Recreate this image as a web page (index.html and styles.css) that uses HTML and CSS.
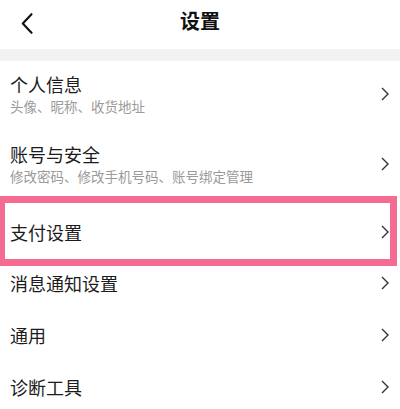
FILE: index.html
```html
<!DOCTYPE html>
<html lang="zh-CN">
<head>
<meta charset="utf-8">
<title>设置</title>
<link rel="stylesheet" href="styles.css">
</head>
<body>
<div class="page">
  <header class="header">
    <div class="header-left">
      <svg class="back" width="12" height="21" viewBox="0 0 12 21" aria-hidden="true">
        <path d="M10.5 1.2 L1.8 10.5 L10.5 19.8" fill="none" stroke="#111" stroke-width="2.1" stroke-linecap="round" stroke-linejoin="round"/>
      </svg>
    </div>
    <h1 class="title">设置</h1>
    <div class="header-right"></div>
  </header>
  <div class="band"></div>
  <ul class="list">
    <li class="row row--sub">
      <div class="row-text">
        <div class="row-title">个人信息</div>
        <div class="row-sub">头像、昵称、收货地址</div>
      </div>
      <svg class="chev" width="8" height="14" viewBox="0 0 8 14" aria-hidden="true"><path d="M1 1 L7 7 L1 13" fill="none" stroke="#333" stroke-width="1.4"/></svg>
    </li>
    <li class="row row--sub">
      <div class="row-text">
        <div class="row-title">账号与安全</div>
        <div class="row-sub">修改密码、修改手机号码、账号绑定管理</div>
      </div>
      <svg class="chev" width="8" height="14" viewBox="0 0 8 14" aria-hidden="true"><path d="M1 1 L7 7 L1 13" fill="none" stroke="#333" stroke-width="1.4"/></svg>
    </li>
    <li class="row row--highlight">
      <div class="row-title">支付设置</div>
      <svg class="chev" width="8" height="14" viewBox="0 0 8 14" aria-hidden="true"><path d="M1 1 L7 7 L1 13" fill="none" stroke="#333" stroke-width="1.4"/></svg>
      <span class="mark"></span>
    </li>
    <li class="row">
      <div class="row-title">消息通知设置</div>
      <svg class="chev" width="8" height="14" viewBox="0 0 8 14" aria-hidden="true"><path d="M1 1 L7 7 L1 13" fill="none" stroke="#333" stroke-width="1.4"/></svg>
    </li>
    <li class="row">
      <div class="row-title">通用</div>
      <svg class="chev" width="8" height="14" viewBox="0 0 8 14" aria-hidden="true"><path d="M1 1 L7 7 L1 13" fill="none" stroke="#333" stroke-width="1.4"/></svg>
    </li>
    <li class="row">
      <div class="row-title">诊断工具</div>
      <svg class="chev" width="8" height="14" viewBox="0 0 8 14" aria-hidden="true"><path d="M1 1 L7 7 L1 13" fill="none" stroke="#333" stroke-width="1.4"/></svg>
    </li>
  </ul>
</div>
</body>
</html>
```

FILE: styles.css
```css
* { box-sizing: border-box; }
html, body {
  margin: 0;
  padding: 0;
  background: #fff;
}
body {
  font-family: "Noto Sans CJK SC", "Noto Sans", sans-serif;
  color: #1c1c1c;
  overflow: hidden;
}
.page {
  width: 400px;
  height: 409px;
  overflow: hidden;
}
.header {
  height: 49px;
  display: grid;
  grid-template-columns: 1fr auto 1fr;
  align-items: start;
  padding-top: 11px;
}
.header-left {
  padding-left: 21px;
  padding-top: 2px;
}
.back { display: block; }
.title {
  margin: 0;
  font-size: 20px;
  line-height: 20px;
  font-weight: 700;
  color: #111;
}
.band {
  height: 12px;
  background: #f2f2f2;
}
.list {
  list-style: none;
  margin: 0;
  padding: 0;
}
.row {
  position: relative;
  height: 52px;
  display: flex;
  align-items: center;
  justify-content: space-between;
  padding: 0 11px 0 10px;
}
.row--sub { height: 70px; }
.row--highlight {
  height: 58px;
  padding-top: 8px;
}
.row-text {
  display: flex;
  flex-direction: column;
  gap: 6px;
  margin-bottom: 4px;
}
.row > .row-title { margin-bottom: 4px; }
.row-title {
  font-size: 18px;
  line-height: 18px;
  color: #1c1c1c;
}
.row-sub {
  font-size: 13.5px;
  line-height: 14px;
  color: #9a9a9a;
}
.chev {
  display: block;
  flex: none;
  margin-bottom: 4px;
}
.mark {
  position: absolute;
  top: -5px;
  bottom: -7px;
  left: -2px;
  right: 3px;
  border: 7px solid #f56c92;
  pointer-events: none;
}
```
